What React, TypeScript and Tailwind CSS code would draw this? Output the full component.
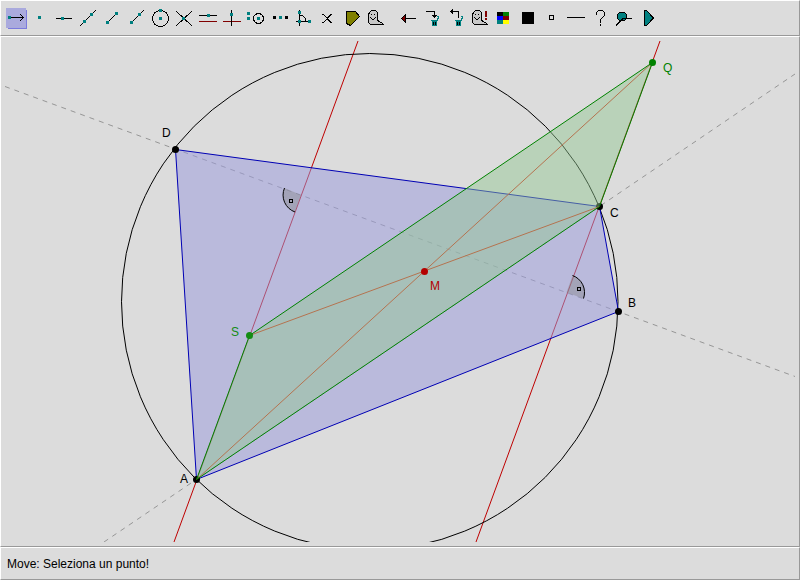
import type { ReactNode } from "react";
import clsx from "clsx";

const TEAL = "#008080";
const MAROON = "#800000";

type Tool = { name: string; icon: ReactNode };

// small 3x3 handle that marks a point in the icons
function Dot({ x, y, color = TEAL }: { x: number; y: number; color?: string }) {
  return <rect x={x} y={y} width="3" height="3" fill={color} stroke="none" />;
}

function Snail() {
  return (
    <>
      <path
        d="M6.5 18.5 L4.5 16.5 V8.5 L5.5 6.5 L7.5 4.5 H11.5 L13.5 6.5 V13.5 L14.5 15.5 L17.5 16.5 L19.5 18.5 Z"
        fill="#c8c8c8"
      />
      <path d="M7.5 8 v1 M10.5 8 v1 M6.5 11.5 L8.5 13.5 H9.5 L11.5 11.5" />
    </>
  );
}

function Trash() {
  return (
    <>
      <rect x="12" y="15" width="5" height="5" fill={TEAL} stroke="none" />
      <path d="M11 14.5 H17.5 V13 L18.5 12 V10.5 H17" stroke={TEAL} />
      <path d="M13.5 16 V19 M15.5 16 V19" />
    </>
  );
}

const drawTools: Tool[] = [
  {
    name: "Move",
    icon: (
      <>
        <rect x="4" y="4" width="19" height="19" fill="#7b7bdd" stroke="none" />
        <rect x="2" y="2" width="20" height="20" fill="#aaaadd" stroke="none" />
        <path d="M7 11.5 H20 M16 8 L19.5 11.5 L16 15" />
        <Dot x={4} y={10} />
      </>
    ),
  },
  { name: "Point", icon: <Dot x={10} y={10} /> },
  {
    name: "Fixed line",
    icon: (
      <>
        <path d="M4 12.5 H20" />
        <Dot x={9} y={11} />
      </>
    ),
  },
  {
    name: "Line",
    icon: (
      <>
        <path d="M4 20 L20 4" />
        <Dot x={7} y={14} />
        <Dot x={14} y={7} />
      </>
    ),
  },
  {
    name: "Segment",
    icon: (
      <>
        <path d="M7 17 L17 7" />
        <Dot x={6} y={15} />
        <Dot x={15} y={6} />
      </>
    ),
  },
  {
    name: "Ray",
    icon: (
      <>
        <path d="M7 17 L20 4" />
        <Dot x={6} y={15} />
        <Dot x={14} y={7} />
      </>
    ),
  },
  {
    name: "Circle",
    icon: (
      <>
        <circle cx="12.5" cy="12.5" r="8" />
        <Dot x={11} y={11} />
        <Dot x={11} y={3} />
      </>
    ),
  },
  {
    name: "Intersection",
    icon: (
      <>
        <path d="M4 5 L20 20 M4 20 L20 5" />
        <Dot x={10} y={11} />
      </>
    ),
  },
  {
    name: "Parallel",
    icon: (
      <>
        <path d="M3 9.5 H21" />
        <path d="M3 15.5 H21" stroke={MAROON} />
        <Dot x={11} y={8} />
      </>
    ),
  },
  {
    name: "Perpendicular",
    icon: (
      <>
        <path d="M3 15.5 H21" stroke={MAROON} />
        <path d="M11.5 4 V20" />
        <Dot x={10} y={7} />
      </>
    ),
  },
  {
    name: "Compass",
    icon: (
      <>
        <circle cx="14.5" cy="12.5" r="5" />
        <Dot x={3} y={6} />
        <Dot x={3} y={11} />
        <Dot x={13} y={11} />
      </>
    ),
  },
  {
    name: "Midpoint",
    icon: (
      <>
        <Dot x={5} y={10} color="#000" />
        <Dot x={11} y={10} />
        <Dot x={17} y={10} color="#000" />
      </>
    ),
  },
  {
    name: "Angle",
    icon: (
      <>
        <path d="M7.5 4 V20 M4 15.5 H18 M7.5 9.5 H10.5 L13.5 12.5 V15.5" />
        <Dot x={6} y={5} />
        <Dot x={6} y={14} />
        <Dot x={16} y={14} />
      </>
    ),
  },
  {
    name: "Expression",
    icon: <path d="M6 8.5 H7.5 L15 16.5 H16 M6 16.5 H7.5 L15 8.5 H16" />,
  },
  {
    name: "Area",
    icon: (
      <path
        d="M6.5 5.5 H15.5 L19.5 10.5 L10.5 19.5 L6.5 17.5 Z"
        fill="#808000"
      />
    ),
  },
  { name: "Track", icon: <Snail /> },
];

const editTools: Tool[] = [
  {
    name: "Back",
    icon: (
      <>
        <path d="M9 12.5 H20" />
        <path d="M5.5 12.5 L9.5 8.5 V16.5 Z" fill={MAROON} />
      </>
    ),
  },
  {
    name: "Delete",
    icon: (
      <>
        <Trash />
        <path d="M6 5.5 H14.5 V10" />
        <path d="M12 9 H17 L14.5 12 Z" fill="#000" stroke="none" />
      </>
    ),
  },
  {
    name: "Undelete",
    icon: (
      <>
        <Trash />
        <path d="M14.5 12 V5.5 H7" />
        <path d="M9 3 V8 L6 5.5 Z" fill="#000" stroke="none" />
      </>
    ),
  },
  {
    name: "Animate",
    icon: (
      <>
        <Snail />
        <path
          d="M17 5 H19 V11 H17 Z M17 12 H19 V14 H17 Z"
          fill={MAROON}
          stroke="none"
        />
      </>
    ),
  },
  {
    name: "Color",
    icon: (
      <g stroke="none">
        <rect x="5" y="6" width="6" height="4" fill="#000" />
        <rect x="11" y="6" width="6" height="4" fill="#008000" />
        <rect x="5" y="10" width="6" height="4" fill="#00f" />
        <rect x="11" y="10" width="6" height="4" fill={MAROON} />
        <rect x="5" y="14" width="6" height="4" fill={TEAL} />
        <rect x="11" y="14" width="6" height="4" fill="#ff0" />
      </g>
    ),
  },
  {
    name: "Fill",
    icon: <rect x="6" y="6" width="12" height="12" fill="#000" stroke="none" />,
  },
  { name: "Point shape", icon: <rect x="9.5" y="9.5" width="4" height="4" /> },
  { name: "Thickness", icon: <path d="M3 11.5 H21" /> },
  {
    name: "Help",
    icon: (
      <path d="M8.5 9 V6.5 L10.5 4.5 H14.5 L16.5 6.5 V9.5 L12.5 13.5 V17 M12.5 18 V20" />
    ),
  },
  {
    name: "Macro",
    icon: (
      <>
        <circle cx="10" cy="10.5" r="4.5" fill={TEAL} />
        <path d="M20 12.5 H11 L4 19.5" />
      </>
    ),
  },
  {
    name: "Play",
    icon: (
      <path d="M8.5 4.5 H10.5 L17.5 12 L10.5 19.5 H8.5 Z" fill={TEAL} />
    ),
  },
];

function ToolGroup({ tools, className }: { tools: Tool[]; className?: string }) {
  return (
    <div className={clsx("flex", className)}>
      {tools.map((t) => (
        <button key={t.name} type="button" aria-label={t.name} className="size-6">
          <svg
            viewBox="0 0 24 24"
            className="size-6"
            fill="none"
            stroke="#000"
            shapeRendering="crispEdges"
          >
            {t.icon}
          </svg>
        </button>
      ))}
    </div>
  );
}

const points = [
  { id: "D", x: 175.5, y: 149.5, lx: 162, ly: 137, color: "#000" },
  { id: "B", x: 618.5, y: 311.5, lx: 628, ly: 307, color: "#000" },
  { id: "A", x: 196.5, y: 479.5, lx: 180, ly: 483, color: "#000" },
  { id: "C", x: 599.5, y: 206.5, lx: 610, ly: 217, color: "#000" },
  { id: "S", x: 249.5, y: 335.5, lx: 231, ly: 336, color: "#148c14" },
  { id: "Q", x: 652.5, y: 62.5, lx: 663, ly: 72, color: "#008200" },
  { id: "M", x: 424.5, y: 271.5, lx: 430, ly: 290, color: "#b40000" },
];

const quad = "M196.5 479.5 L618.5 311.5 L599.5 206.5 L175.5 149.5 Z";
const parallelogram = "M196.5 479.5 L249.5 335.5 L652.5 62.5 L599.5 206.5 Z";

function Construction() {
  return (
    <svg
      viewBox="5 41 790 501"
      className="h-full w-full"
      fill="none"
      role="img"
      aria-label="Geometric construction"
    >
      {/* helper lines */}
      <g stroke="#969696" strokeDasharray="5 5">
        <path d="M5 86.5 L795 376.5" />
        <path d="M104 542 L795 74" />
      </g>
      <g stroke="#be0000">
        <path d="M358 41 L174 542" />
        <path d="M660 41 L476 542" />
      </g>

      {/* quadrilateral ABCD */}
      <path d={quad} fill="#9b9bdc" fillOpacity="0.52" />
      <circle cx="369.75" cy="301.75" r="248.25" stroke="#000" />
      <path d={quad} stroke="#0000b4" />

      {/* right angles */}
      <g fill="#828282" fillOpacity="0.4">
        <path d="M301 195 L284.5 188 A18 18 0 0 0 295 212 Z" />
        <path d="M566.5 292.5 L572.5 275.5 A18 18 0 0 1 583.5 298.5 Z" />
      </g>
      <path
        d="M284.5 188 A18 18 0 0 0 295 212 M572.5 275.5 A18 18 0 0 1 583.5 298.5"
        stroke="#000"
      />
      <path
        d="M289.5 199.5 h3 v3 h-3 Z M577.5 287.5 h3 v3 h-3 Z"
        stroke="#000"
        shapeRendering="crispEdges"
      />

      {points.slice(0, 4).map((p) => (
        <circle key={p.id} cx={p.x} cy={p.y} r="3.5" fill={p.color} />
      ))}

      {/* parallelogram ASQC with its diagonals */}
      <path
        d="M249.5 335.5 L599.5 206.5 M196.5 479.5 L652.5 62.5"
        stroke="#d22814"
      />
      <path d={parallelogram} fill="#92c892" fillOpacity="0.47" />
      <path d={parallelogram} stroke="#008200" />
      {points.slice(4).map((p) => (
        <circle key={p.id} cx={p.x} cy={p.y} r="3.5" fill={p.color} />
      ))}

      <g fontSize="12">
        {points.map((p) => (
          <text key={p.id} x={p.lx} y={p.ly} fill={p.color}>
            {p.id}
          </text>
        ))}
      </g>
    </svg>
  );
}

const panel = "border border-t-white border-l-white border-r-[#999] border-b-[#999]";

export default function App() {
  return (
    <div className="flex h-screen flex-col bg-[#dcdcdc] font-['Liberation_Sans',Arial,sans-serif] text-xs text-black">
      <header className={clsx("flex h-9 items-center px-[3px]", panel)}>
        <ToolGroup tools={drawTools} />
        <ToolGroup tools={editTools} className="ml-2" />
      </header>

      <main className={clsx("min-h-0 flex-1 p-1", panel)}>
        <Construction />
      </main>

      <footer className={clsx("flex h-[33px] items-center px-1.5", panel)}>
        <p>Move: Seleziona un punto!</p>
      </footer>
    </div>
  );
}
